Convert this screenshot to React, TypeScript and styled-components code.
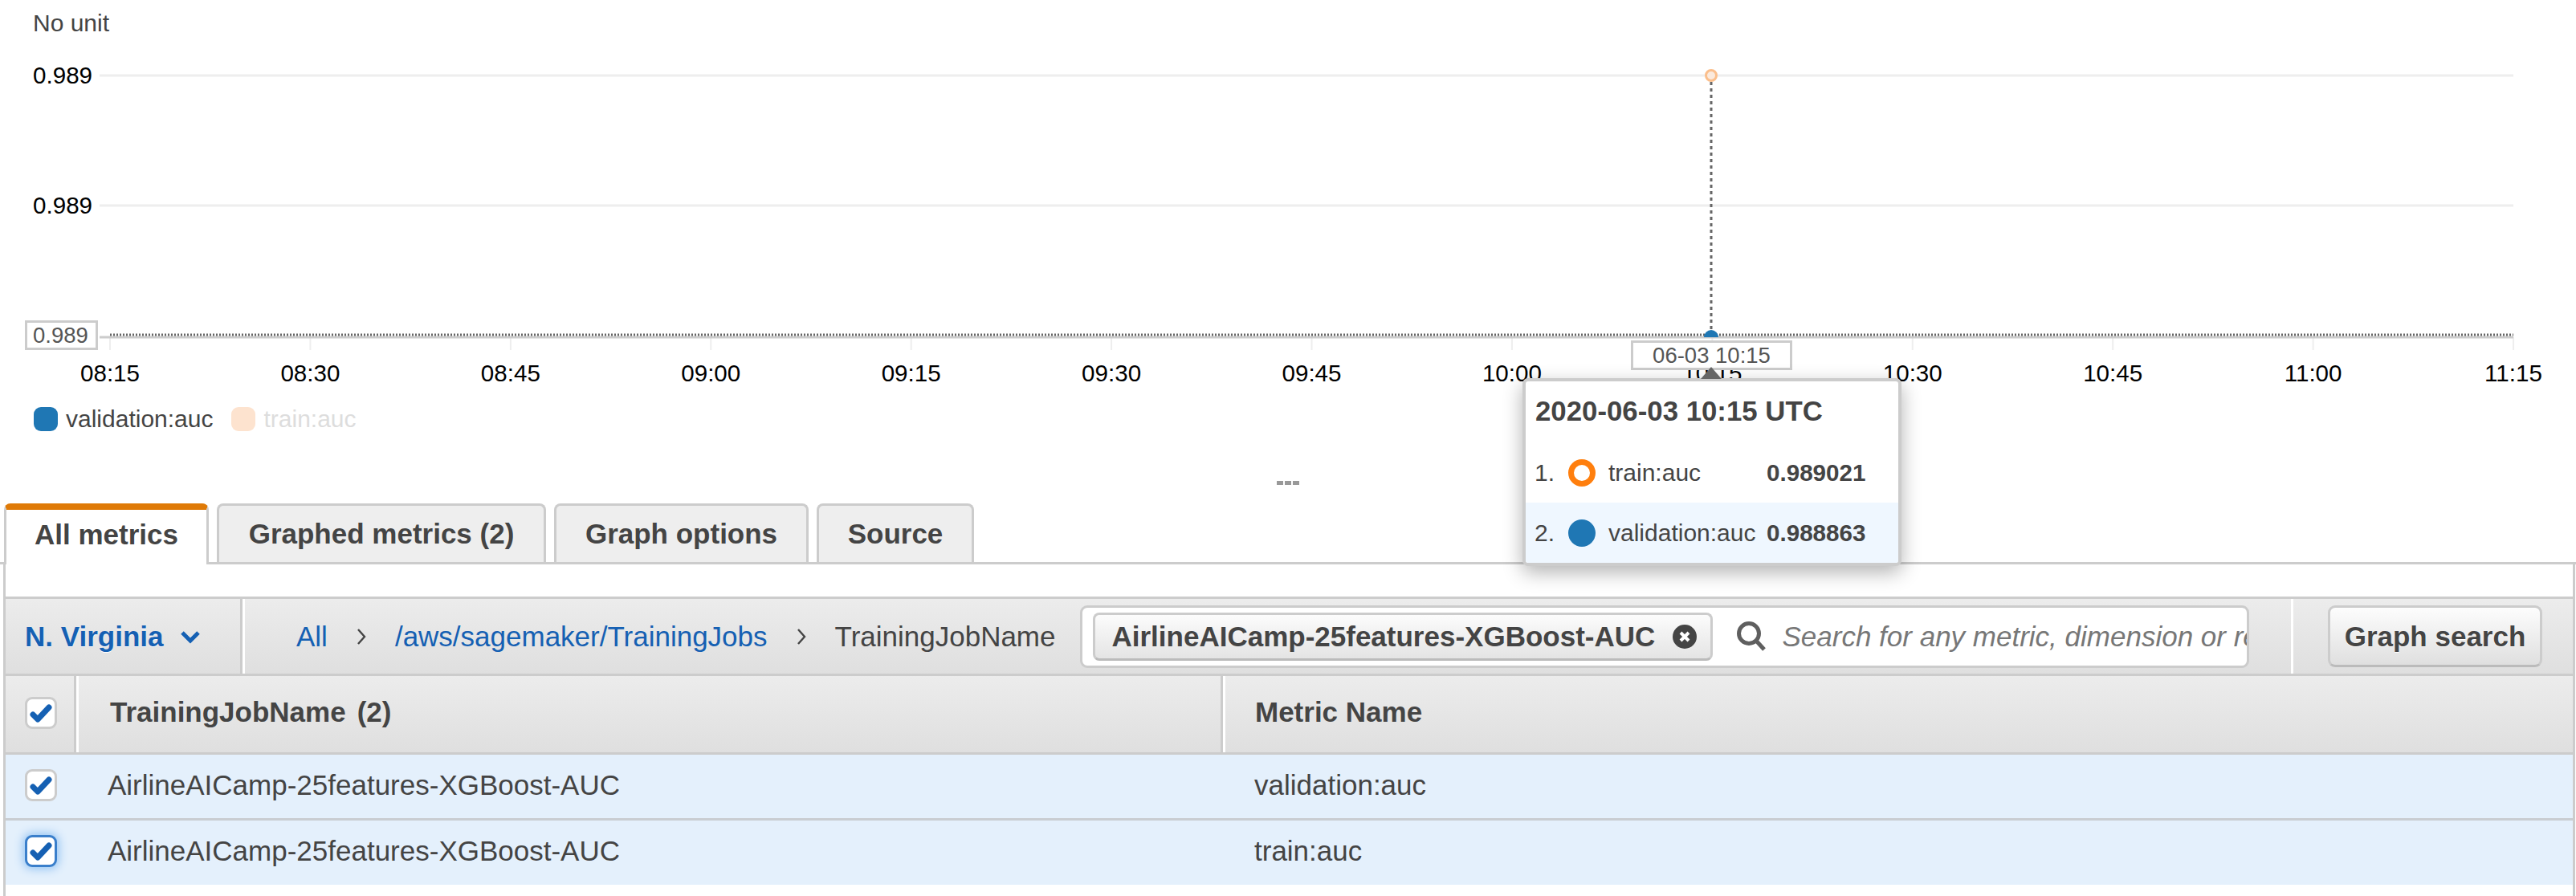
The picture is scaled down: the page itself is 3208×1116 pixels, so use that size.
import React from 'react';
import styled, { createGlobalStyle } from 'styled-components';

const GlobalStyle = createGlobalStyle`
  html, body {
    margin: 0;
    padding: 0;
    background: #fff;
  }
  body {
    font-family: "Liberation Sans", Arial, sans-serif;
    color: #444;
  }
`;

const Page = styled.div`
  position: relative;
  width: 3208px;
  height: 1116px;
  overflow: hidden;
  background: #fff;
`;

/* chart part */
const ChartSection = styled.section`
  height: 627px;
  display: flex;
  flex-direction: column;
`;

const UnitLabel = styled.div`
  height: 56px;
  padding-left: 41px;
  font-size: 30px;
  line-height: 57px;
  color: #444;
`;

const ChartSvg = styled.svg`
  display: block;
  flex: none;
  font-family: "Liberation Sans", Arial, sans-serif;
`;

const Legend = styled.div`
  display: flex;
  align-items: center;
  height: 30px;
  margin-top: 17px;
  padding-left: 42px;
`;

const LegendItem = styled.div<{ $muted?: boolean }>`
  display: flex;
  align-items: center;
  gap: 10px;
  margin-right: 23px;
  font-size: 30px;
  color: ${p => (p.$muted ? '#ddd' : '#444')};
`;

const LegendSwatch = styled.span<{ $color: string }>`
  width: 30px;
  height: 30px;
  border-radius: 9px;
  background: ${p => p.$color};
`;

const ResizeHandle = styled.div`
  display: flex;
  justify-content: center;
  gap: 2px;
  margin-top: 62px;
`;

const HandleDot = styled.span`
  width: 8px;
  height: 5px;
  background: #999;
`;

/* tabs */
const TabBar = styled.div`
  display: flex;
  gap: 10px;
  height: 76px;
  box-sizing: border-box;
  padding-left: 5px;
  border-bottom: 3px solid #ccc;
`;

const Tab = styled.div<{ $active?: boolean; $width: number }>`
  box-sizing: border-box;
  height: ${p => (p.$active ? '76px' : '73px')};
  width: ${p => p.$width}px;
  display: flex;
  align-items: center;
  justify-content: center;
  font-size: 35px;
  font-weight: 700;
  color: #444;
  border: 3px solid #ccc;
  border-bottom: 0;
  border-radius: 8px 8px 0 0;
  background: ${p => (p.$active ? '#fff' : '#eee')};
  ${p => p.$active && 'border-top: 8px solid #df7a07; padding-bottom: 6px;'}
`;

/* main panel */
const Panel = styled.div`
  height: 413px;
  margin: 0 1px 0 4px;
  padding-top: 40px;
  box-sizing: border-box;
  border-left: 3px solid #ccc;
  border-right: 3px solid #ccc;
`;

const Toolbar = styled.div`
  display: flex;
  height: 99px;
  box-sizing: border-box;
  border-top: 3px solid #ccc;
  border-bottom: 3px solid #ccc;
  background: linear-gradient(#ececec, #dfdfdf);
`;

const RegionPicker = styled.div`
  width: 295px;
  box-sizing: border-box;
  display: flex;
  align-items: center;
  gap: 21px;
  padding-left: 24px;
  font-size: 35px;
  font-weight: 700;
  color: #1560b3;
  text-shadow: 0 1px 0 #fff;
  border-right: 3px solid #ccc;
  box-shadow: 3px 0 0 #fff;
`;

const Breadcrumbs = styled.div`
  flex: 1;
  min-width: 0;
  display: flex;
  align-items: center;
  padding-left: 67px;
  font-size: 35px;
`;

const CrumbLink = styled.span`
  color: #1560b3;
`;

const CrumbText = styled.span`
  color: #444;
`;

const Chevron = styled.svg`
  margin: 0 36px;
  flex: none;
`;

const SearchBox = styled.div`
  width: 1456px;
  height: 78px;
  flex: none;
  box-sizing: border-box;
  margin-left: 30px;
  display: flex;
  align-items: center;
  padding-left: 13px;
  overflow: hidden;
  background: #fff;
  border: 3px solid #ccc;
  border-radius: 9px;
`;

const FilterChip = styled.div`
  width: 772px;
  height: 60px;
  flex: none;
  box-sizing: border-box;
  display: flex;
  align-items: center;
  padding-left: 21px;
  font-size: 35px;
  font-weight: 700;
  white-space: nowrap;
  color: #444;
  border: 3px solid #ccc;
  border-bottom-color: #bbb;
  border-radius: 8px;
  background: linear-gradient(#fcfcfc, #e4e4e4);
`;

const ChipClose = styled.svg`
  margin-left: 22px;
  flex: none;
`;

const SearchIcon = styled.svg`
  margin-left: 29px;
  flex: none;
`;

const Placeholder = styled.div`
  flex: 1;
  min-width: 0;
  overflow: hidden;
  margin-left: 20px;
  font-size: 35px;
  font-style: italic;
  white-space: nowrap;
  color: #777;
`;

const GraphAction = styled.div`
  width: 351px;
  margin-left: 52px;
  flex: none;
  box-sizing: border-box;
  display: flex;
  align-items: center;
  padding-left: 43px;
  border-left: 3px solid #fff;
`;

const GraphButton = styled.div`
  width: 267px;
  height: 77px;
  box-sizing: border-box;
  display: flex;
  align-items: center;
  justify-content: center;
  font-size: 35px;
  font-weight: 700;
  color: #444;
  text-shadow: 0 1px 0 #fff;
  border: 3px solid #ccc;
  border-bottom-color: #bbb;
  border-radius: 9px;
  background: linear-gradient(#fdfdfd, #dfdfdf);
`;

const HeaderRow = styled.div`
  display: flex;
  height: 98px;
  box-sizing: border-box;
  border-bottom: 3px solid #ccc;
  background: linear-gradient(#ececec, #dfdfdf);
`;

const CheckCell = styled.div<{ $divider?: boolean }>`
  width: 88px;
  flex: none;
  box-sizing: border-box;
  display: flex;
  align-items: center;
  padding: 0 0 4px 24px;
  ${p => p.$divider && 'border-right: 3px solid #ccc; box-shadow: 3px 0 0 #fff;'}
`;

const HeaderCell = styled.div<{ $width?: number }>`
  box-sizing: border-box;
  display: flex;
  align-items: center;
  gap: 14px;
  padding-bottom: 6px;
  font-size: 35px;
  font-weight: 700;
  color: #444;
  ${p => (p.$width ? `width: ${p.$width}px; padding-left: 42px; border-right: 3px solid #ccc; box-shadow: 3px 0 0 #fff;` : 'padding-left: 40px;')}
`;

const DataRow = styled.div<{ $last?: boolean }>`
  display: flex;
  box-sizing: border-box;
  height: ${p => (p.$last ? '80px' : '82px')};
  background: #e4f0fc;
  ${p => !p.$last && 'border-bottom: 3px solid #c9cdd2;'}
`;

const NameCell = styled.div`
  width: 1431px;
  box-sizing: border-box;
  padding: 0 0 4px 39px;
  display: flex;
  align-items: center;
  font-size: 35px;
  color: #444;
`;

const ValueCell = styled.div`
  padding: 0 0 4px 36px;
  display: flex;
  align-items: center;
  font-size: 35px;
  color: #444;
`;

const CheckBox = styled.div<{ $focused?: boolean }>`
  width: 40px;
  height: 40px;
  box-sizing: border-box;
  display: flex;
  align-items: center;
  justify-content: center;
  background: #fff;
  border: 3px solid ${p => (p.$focused ? '#3a7fcb' : '#ccc')};
  border-radius: 9px;
  ${p => p.$focused && 'box-shadow: 0 0 12px 2px #8fc1f2;'}
`;

/* tooltip over the chart */
const TimeLabel = styled.div`
  position: absolute;
  left: 2031px;
  top: 424px;
  width: 201px;
  height: 37px;
  box-sizing: border-box;
  display: flex;
  align-items: center;
  justify-content: center;
  font-size: 27.5px;
  color: #555;
  background: #fff;
  border: 3px solid #ccc;
`;

const TooltipArrow = styled.div`
  position: absolute;
  left: 2118px;
  top: 457px;
  width: 0;
  height: 0;
  border-left: 13px solid transparent;
  border-right: 13px solid transparent;
  border-bottom: 15px solid #666;
`;

const Tooltip = styled.div`
  position: absolute;
  left: 1896px;
  top: 471px;
  width: 472px;
  height: 234px;
  box-sizing: border-box;
  overflow: hidden;
  background: #fff;
  border: 4px solid #ccc;
  border-radius: 7px;
  box-shadow: 0 8px 24px rgba(0, 0, 0, 0.3);
`;

const TooltipTitle = styled.div`
  height: 76px;
  padding-left: 12px;
  font-size: 34.8px;
  font-weight: 700;
  line-height: 74px;
  color: #444;
`;

const TooltipRow = styled.div<{ $active?: boolean }>`
  height: 75px;
  display: flex;
  align-items: center;
  padding-left: 11px;
  font-size: 30px;
  color: #444;
  background: ${p => (p.$active ? '#eff7ff' : '#fff')};
`;

const RowIndex = styled.span`
  width: 42px;
`;

const RowMarker = styled.span<{ $hollow?: boolean; $color: string }>`
  width: 34px;
  height: 34px;
  flex: none;
  box-sizing: border-box;
  border-radius: 50%;
  background: ${p => (p.$hollow ? '#fff' : p.$color)};
  border: ${p => (p.$hollow ? 7 : 0)}px solid ${p => p.$color};
`;

const RowName = styled.span`
  width: 197px;
  margin-left: 16px;
`;

const RowValue = styled.span`
  font-size: 29.6px;
  font-weight: 700;
`;

const xTicks = ['08:15', '08:30', '08:45', '09:00', '09:15', '09:30', '09:45', '10:00', '10:15', '10:30', '10:45', '11:00', '11:15'];
const originY = 56;
const tickX = (i: number) => 137 + i * 249.42;

const Chart = () => (
  <ChartSvg width={3208} height={434} viewBox={`0 ${originY} 3208 434`}>
    <g stroke="#eee" strokeWidth={3}>
      <line x1={124} x2={3130} y1={94} y2={94} />
      <line x1={124} x2={3130} y1={256} y2={256} />
      {xTicks.map((t, i) => (
        <line key={t} x1={tickX(i)} x2={tickX(i)} y1={420} y2={436} strokeWidth={2} />
      ))}
    </g>
    <text x={41} y={104} fontSize={29.6} fill="#000">0.989</text>
    <text x={41} y={266} fontSize={29.6} fill="#000">0.989</text>
    {xTicks.map((t, i) => (
      <text key={t} x={tickX(i)} y={475} fontSize={29.6} fill="#000" textAnchor="middle">{t}</text>
    ))}
    <line x1={124} x2={3130} y1={420} y2={420} stroke="#ccc" strokeWidth={3} />
    <line x1={137} x2={3130} y1={417} y2={417} stroke="#666" strokeWidth={3} strokeDasharray="2 2" />
    <rect x={32.5} y={400.5} width={88} height={34} fill="#fff" stroke="#ccc" strokeWidth={3} />
    <text x={41} y={427} fontSize={27.5} fill="#555">0.989</text>
    <line x1={2131} x2={2131} y1={94} y2={417} stroke="#666" strokeWidth={3} strokeDasharray="4 4" />
    <circle cx={2131} cy={94} r={6.5} fill="#fbeadd" stroke="#fbbf8c" strokeWidth={3} />
    <path d="M2122 420a9 9 0 0 1 18 0z" fill="#1f77b4" />
  </ChartSvg>
);

const Tick = () => (
  <svg width="28" height="24" viewBox="0 0 28 24">
    <path d="M4 14l6 6L24 5" fill="none" stroke="#1560b3" strokeWidth="7" strokeLinecap="round" strokeLinejoin="round" />
  </svg>
);

const CrumbChevron = () => (
  <Chevron width="12" height="22" viewBox="0 0 12 22">
    <path d="M2 2l8 9-8 9" fill="none" stroke="#444" strokeWidth="2.4" />
  </Chevron>
);

const rows = [
  { name: 'AirlineAICamp-25features-XGBoost-AUC', metric: 'validation:auc' },
  { name: 'AirlineAICamp-25features-XGBoost-AUC', metric: 'train:auc', focused: true, last: true },
];

export default function App() {
  return (
    <Page>
      <GlobalStyle />
      <ChartSection>
        <UnitLabel>No unit</UnitLabel>
        <Chart />
        <Legend>
          <LegendItem>
            <LegendSwatch $color="#1f77b4" />
            validation:auc
          </LegendItem>
          <LegendItem $muted>
            <LegendSwatch $color="#fde3cf" />
            train:auc
          </LegendItem>
        </Legend>
        <ResizeHandle>
          <HandleDot />
          <HandleDot />
          <HandleDot />
        </ResizeHandle>
      </ChartSection>

      <TabBar>
        <Tab $active $width={255}>All metrics</Tab>
        <Tab $width={410}>Graphed metrics (2)</Tab>
        <Tab $width={317}>Graph options</Tab>
        <Tab $width={196}>Source</Tab>
      </TabBar>

      <Panel>
        <Toolbar>
          <RegionPicker>
            N. Virginia
            <svg width="26" height="18" viewBox="0 0 26 18">
              <path d="M3 4l10 10L23 4" fill="none" stroke="#1560b3" strokeWidth="5" />
            </svg>
          </RegionPicker>
          <Breadcrumbs>
            <CrumbLink>All</CrumbLink>
            <CrumbChevron />
            <CrumbLink>/aws/sagemaker/TrainingJobs</CrumbLink>
            <CrumbChevron />
            <CrumbText>TrainingJobName</CrumbText>
            <SearchBox>
              <FilterChip>
                AirlineAICamp-25features-XGBoost-AUC
                <ChipClose width="30" height="30" viewBox="0 0 30 30">
                  <circle cx="15" cy="15" r="15" fill="#444" />
                  <path d="M10 10l10 10M20 10L10 20" stroke="#fff" strokeWidth="4" />
                </ChipClose>
              </FilterChip>
              <SearchIcon width="38" height="38" viewBox="0 0 38 38">
                <circle cx="16" cy="15" r="12.5" fill="none" stroke="#5f5f5f" strokeWidth="5" />
                <path d="M25 24l10 11" stroke="#5f5f5f" strokeWidth="5" />
              </SearchIcon>
              <Placeholder>Search for any metric, dimension or resource id</Placeholder>
            </SearchBox>
          </Breadcrumbs>
          <GraphAction>
            <GraphButton>Graph search</GraphButton>
          </GraphAction>
        </Toolbar>

        <HeaderRow>
          <CheckCell $divider>
            <CheckBox><Tick /></CheckBox>
          </CheckCell>
          <HeaderCell $width={1428}>TrainingJobName <span>(2)</span></HeaderCell>
          <HeaderCell>Metric Name</HeaderCell>
        </HeaderRow>

        {rows.map(r => (
          <DataRow key={r.metric} $last={r.last}>
            <CheckCell>
              <CheckBox $focused={r.focused}><Tick /></CheckBox>
            </CheckCell>
            <NameCell>{r.name}</NameCell>
            <ValueCell>{r.metric}</ValueCell>
          </DataRow>
        ))}
      </Panel>

      <TimeLabel>06-03 10:15</TimeLabel>
      <Tooltip>
        <TooltipTitle>2020-06-03 10:15 UTC</TooltipTitle>
        <TooltipRow>
          <RowIndex>1.</RowIndex>
          <RowMarker $hollow $color="#ff7f0e" />
          <RowName>train:auc</RowName>
          <RowValue>0.989021</RowValue>
        </TooltipRow>
        <TooltipRow $active>
          <RowIndex>2.</RowIndex>
          <RowMarker $color="#1f77b4" />
          <RowName>validation:auc</RowName>
          <RowValue>0.988863</RowValue>
        </TooltipRow>
      </Tooltip>
      <TooltipArrow />
    </Page>
  );
}
